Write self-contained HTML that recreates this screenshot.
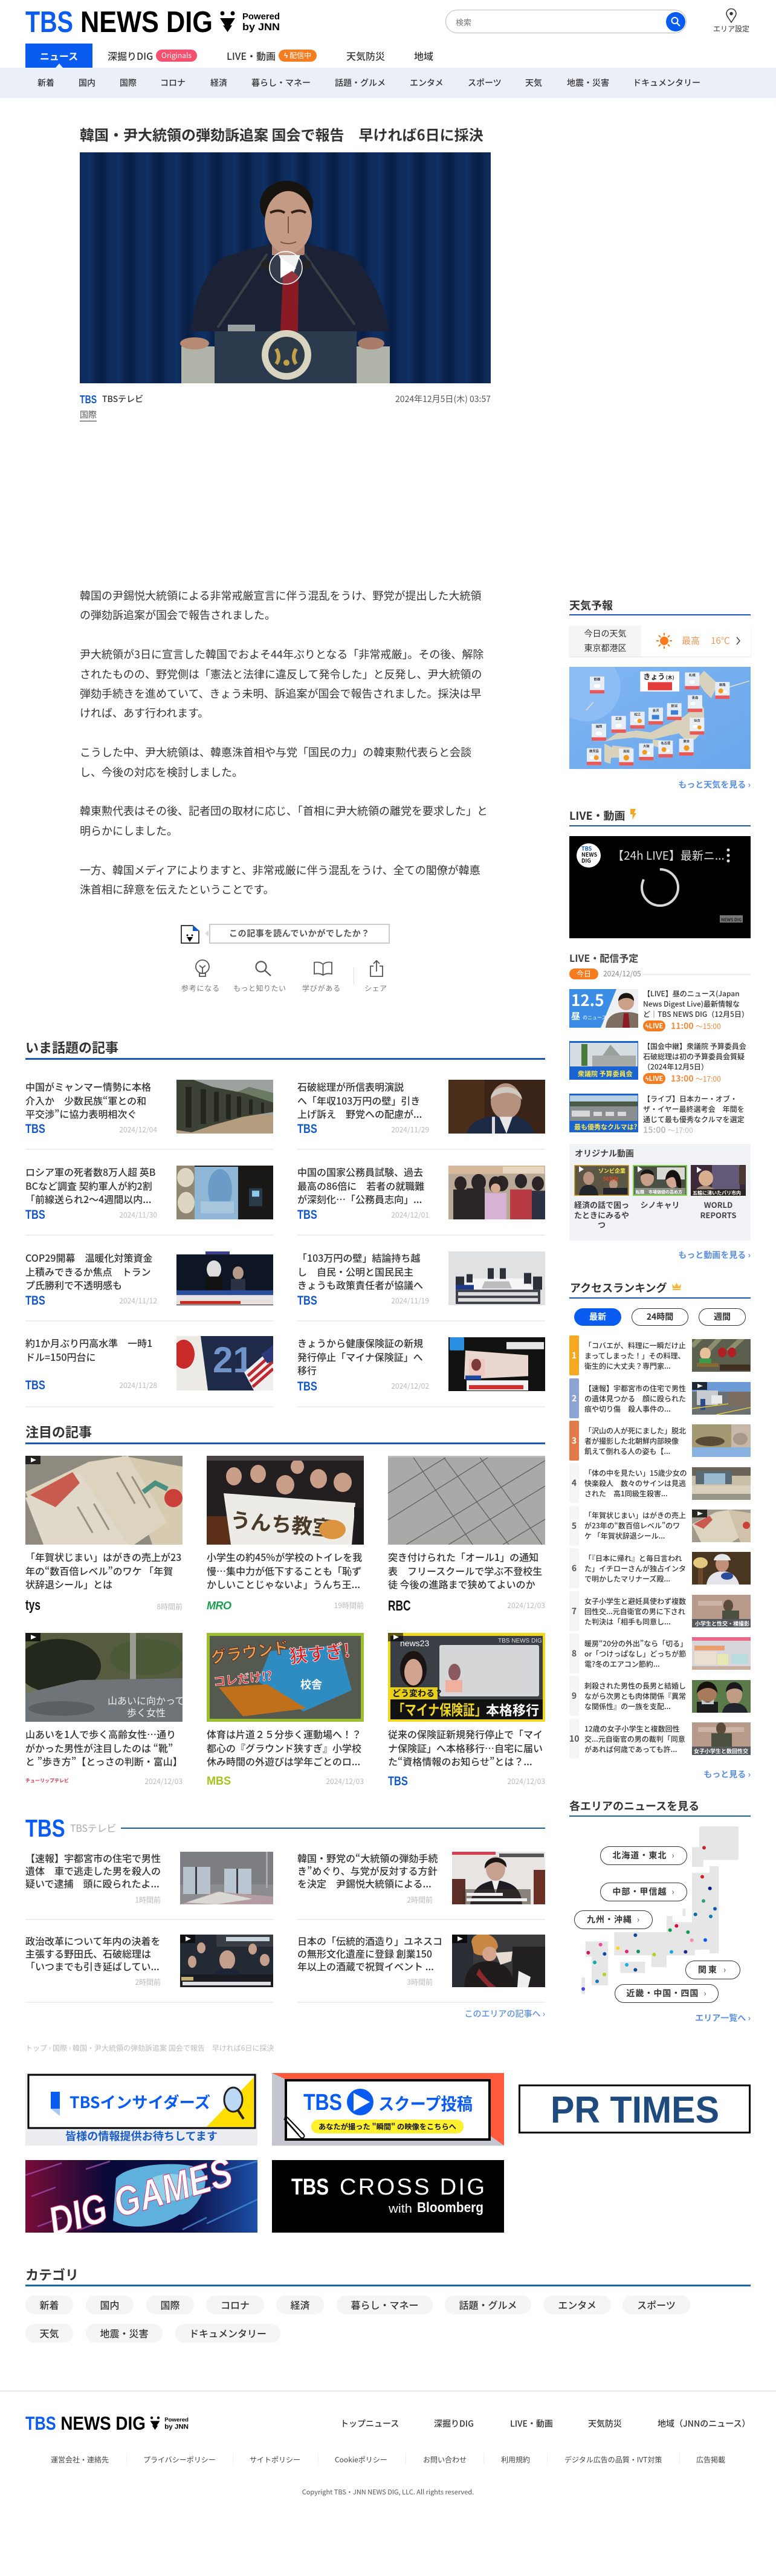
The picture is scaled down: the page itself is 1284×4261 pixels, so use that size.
<!DOCTYPE html>
<html lang="ja"><head><meta charset="utf-8"><title>韓国・尹大統領の弾劾訴追案 国会で報告　早ければ6日に採決 | TBS NEWS DIG</title>
<style>
html,body{margin:0;padding:0;width:1284px;height:4261px;background:#fff;overflow:hidden}
body{position:relative;font-family:"Noto Sans CJK JP","Liberation Sans",sans-serif;color:#333}
.a{position:absolute;white-space:nowrap}
svg.a{display:block}
.sub{top:127px;font-size:14px;line-height:20px;font-weight:500;color:#333}
.nv{top:80px;font-size:16px;line-height:24px;font-weight:500;color:#333}
.h2{font-size:22px;line-height:30px;font-weight:700;color:#333}
.h3{font-size:18px;line-height:26px;font-weight:700;color:#333}
.ln{height:3px;background:#1a58b4}
.tt{font-size:16px;line-height:22.6px;font-weight:500;color:#333}
.d{font-size:12px;line-height:16px;color:#bbb}
.tb{font:700 21px/20px "Liberation Sans",sans-serif;color:#1256c8;transform:scaleX(.78);transform-origin:0 0}
.dv{height:2px;background:#eee;width:410px}
.body{font-size:18px;line-height:32.4px;color:#333}
.sm{font-size:12px;line-height:17px;font-weight:500;color:#333}
.rn{left:942px;width:16px;height:66px;line-height:66px;text-align:center;font-size:14px;font-weight:700;background:#f5f5f5;color:#555;border-radius:2px}
.more{font-size:14px;line-height:20px;font-weight:700;color:#5c8fdc}
.pill{height:31px;line-height:30px;background:#f5f5f5;border-radius:15px;text-align:center;font-size:16px;font-weight:500;color:#333}
.fn{top:3999px;font-size:14px;line-height:20px;font-weight:500;color:#333}
.fl{top:4060px;font-size:12px;line-height:18px;color:#444}
.fs{top:4058px;width:1px;height:17px;background:#eee}
.ar{height:31px;line-height:29px;box-sizing:border-box;border:1px solid #333;border-radius:16px;background:#fff;font-size:14px;font-weight:700;color:#333;text-align:center}
.ar i{font-style:normal;font-weight:400;color:#555;margin-left:8px;font-size:14px}
</style></head><body>

<!-- header -->
<svg class="a" style="left:42px;top:17px" width="421" height="37" viewBox="0 0 421 37">
<text x="0" y="36" font-family="Liberation Sans" font-weight="700" font-size="49" textLength="79" lengthAdjust="spacingAndGlyphs" fill="#0a5cf0">TBS</text>
<text x="91" y="36" font-family="Liberation Sans" font-weight="700" font-size="49" textLength="219" lengthAdjust="spacingAndGlyphs" fill="#000">NEWS DIG</text>
<circle cx="326" cy="5" r="3.5"/><circle cx="343" cy="5" r="3.5"/>
<polygon points="322,13 347,13 339,25 342,25 334.5,36 327,25 330,25"/>
<text x="359" y="15" font-family="Liberation Sans" font-weight="700" font-size="15" textLength="62" lengthAdjust="spacingAndGlyphs">Powered</text>
<text x="359" y="33" font-family="Liberation Sans" font-weight="700" font-size="17" textLength="62" lengthAdjust="spacingAndGlyphs">by JNN</text>
</svg>
<div class="a" style="left:737px;top:16px;width:399px;height:39px;box-sizing:border-box;border:1px solid #bbb;border-radius:20px"></div>
<div class="a" style="left:754px;top:28px;font-size:13px;line-height:18px;color:#777">検索</div>
<div class="a" style="left:1102px;top:20px;width:32px;height:32px;border-radius:50%;background:#0a5cf0"></div>
<svg class="a" style="left:1108px;top:26px" width="20" height="20" viewBox="0 0 20 20" fill="none" stroke="#fff" stroke-width="2"><circle cx="8.5" cy="8" r="5"/><path d="M12 12l5 5"/></svg>
<svg class="a" style="left:1199px;top:14px" width="22" height="24" viewBox="0 0 22 24" fill="none" stroke="#333" stroke-width="1.5"><path d="M11 23C6 15 3 12 3 8.5a8 8 0 0 1 16 0C19 12 16 15 11 23z"/><circle cx="11" cy="8.5" r="2" fill="#333"/></svg>
<div class="a" style="left:1178px;top:39px;width:64px;text-align:center;font-size:12px;line-height:17px;color:#333">エリア設定</div>

<div class="a" style="left:42px;top:72px;width:111px;height:40px;background:#0a5cf0"></div>
<div class="a" style="left:42px;top:80px;width:111px;text-align:center;font-size:16px;line-height:24px;font-weight:700;color:#fff">ニュース</div>
<div class="a" style="left:92px;top:105px;width:0;height:0;border-left:6px solid transparent;border-right:6px solid transparent;border-bottom:7px solid #eaeff8;z-index:3"></div>
<div class="a nv" style="left:178px">深掘りDIG</div>
<div class="a" style="left:258px;top:82px;width:68px;height:20px;border-radius:10px;background:#f5506e;color:#fff;font-size:12px;line-height:20px;text-align:center">Originals</div>
<div class="a nv" style="left:375px">LIVE・動画</div>
<div class="a" style="left:461px;top:82px;width:63px;height:20px;border-radius:10px;background:#f57c1f;color:#fff;font-size:12px;line-height:20px;text-align:center"><b>ϟ</b> 配信中</div>
<div class="a nv" style="left:573px">天気防災</div>
<div class="a nv" style="left:685px">地域</div>

<div class="a" style="left:0;top:112px;width:1284px;height:50px;background:#eaeff8"></div>
<div class="a sub" style="left:62px">新着</div>
<div class="a sub" style="left:130px">国内</div>
<div class="a sub" style="left:198px">国際</div>
<div class="a sub" style="left:265px">コロナ</div>
<div class="a sub" style="left:348px">経済</div>
<div class="a sub" style="left:416px">暮らし・マネー</div>
<div class="a sub" style="left:554px">話題・グルメ</div>
<div class="a sub" style="left:678px">エンタメ</div>
<div class="a sub" style="left:774px">スポーツ</div>
<div class="a sub" style="left:869px">天気</div>
<div class="a sub" style="left:938px">地震・災害</div>
<div class="a sub" style="left:1047px">ドキュメンタリー</div>

<!-- article -->
<div class="a" style="left:132px;top:204px;font-size:24px;line-height:36px;font-weight:700;color:#333">韓国・尹大統領の弾劾訴追案 国会で報告　早ければ6日に採決</div>
<svg class="a" style="left:132px;top:252px" width="680" height="382" viewBox="0 0 680 382">
<defs><linearGradient id="cur" x1="0" x2="1" y1="0" y2="0"><stop offset="0" stop-color="#0e2b5a"/><stop offset=".35" stop-color="#0f3063"/><stop offset=".55" stop-color="#0b2550"/><stop offset=".75" stop-color="#081d42"/><stop offset="1" stop-color="#0e2b5a"/></linearGradient>
<pattern id="cp" width="48" height="382" patternUnits="userSpaceOnUse"><rect width="48" height="382" fill="url(#cur)"/></pattern></defs>
<rect width="680" height="382" fill="url(#cp)"/>
<path d="M184 296C190 230 215 190 240 172L320 150 372 150 453 172C480 200 505 250 512 296Z" fill="#1b2236"/>
<polygon points="320,150 372,150 371,296 325,296" fill="#eef0f0"/>
<polygon points="300,156 320,150 345,205 332,296 300,296" fill="#1b2236"/>
<polygon points="392,156 372,150 352,205 361,296 392,296" fill="#1b2236"/>
<polygon points="336,205 350,195 362,205 361,296 332,296" fill="#8a1a24"/>
<ellipse cx="342" cy="86" rx="44" ry="39" fill="#17130f"/>
<rect x="318" y="130" width="54" height="40" fill="#b08672"/>
<ellipse cx="345" cy="116" rx="39" ry="52" fill="#c49a84"/>
<path d="M315 100q14-7 24 0M350 100q14-7 24 0" stroke="#2c2018" stroke-width="4" fill="none"/>
<path d="M345 106v28M332 148q13 6 26 0" stroke="#7c5442" stroke-width="2" fill="none"/>
<path d="M310 168L228 290M372 168L455 285" stroke="#3c3f46" stroke-width="4" fill="none"/>
<circle cx="308" cy="186" r="8" fill="#222"/><circle cx="375" cy="186" r="8" fill="#222"/>
<rect x="168" y="321" width="56" height="61" fill="#b0b3a8"/><rect x="457" y="321" width="56" height="61" fill="#b0b3a8"/>
<rect x="245" y="285" width="45" height="12" fill="#9aa0a0"/>
<ellipse cx="190" cy="316" rx="24" ry="10" fill="#b78a74"/><ellipse cx="482" cy="316" rx="22" ry="10" fill="#a87c68"/>
<rect x="223" y="296" width="235" height="86" fill="#2c3a4e"/>
<circle cx="342" cy="335" r="41" fill="#d8d4c0"/><circle cx="342" cy="335" r="30" fill="#2c3a48"/>
<path d="M325 325q8 14 0 25M358 325q-8 14 0 25" stroke="#c2a04c" stroke-width="6" fill="none"/>
<circle cx="342" cy="348" r="5" fill="#c2a04c"/>
<circle cx="341" cy="191" r="27" fill="rgba(255,255,255,.12)" stroke="#fff" stroke-width="1.5"/>
<polygon points="332,174 358,192 332,208" fill="#fff"/>
</svg>
<div class="a tb" style="left:132px;top:651px;color:#1256c8;font-size:18px;transform:scaleX(.78)">TBS</div>
<div class="a" style="left:169px;top:650px;font-size:14px;line-height:20px;font-weight:500;color:#333">TBSテレビ</div>
<div class="a" style="right:472px;top:650px;font-size:14px;line-height:20px;color:#555">2024年12月5日(木) 03:57</div>
<div class="a" style="left:132px;top:676px;font-size:14px;line-height:20px;color:#555;border-bottom:1px solid #333">国際</div>

<div class="a body" style="left:132px;top:969px">韓国の尹錫悦大統領による非常戒厳宣言に伴う混乱をうけ、野党が提出した大統領<br>の弾劾訴追案が国会で報告されました。<br><br>尹大統領が3日に宣言した韓国でおよそ44年ぶりとなる「非常戒厳」。その後、解除<br>されたものの、野党側は「憲法と法律に違反して発令した」と反発し、尹大統領の<br>弾劾手続きを進めていて、きょう未明、訴追案が国会で報告されました。採決は早<br>ければ、あす行われます。<br><br>こうした中、尹大統領は、韓悳洙首相や与党「国民の力」の韓東勲代表らと会談<br>し、今後の対応を検討しました。<br><br>韓東勲代表はその後、記者団の取材に応じ、「首相に尹大統領の離党を要求した」と<br>明らかにしました。<br><br>一方、韓国メディアによりますと、非常戒厳に伴う混乱をうけ、全ての閣僚が韓悳<br>洙首相に辞意を伝えたということです。</div>

<!-- feedback -->
<svg class="a" style="left:299px;top:1530px" width="31" height="31" viewBox="0 0 31 31"><path d="M1 1H20L30 10V30H1Z" fill="#fff" stroke="#000" stroke-width="1.5"/><polygon points="20,0 31,10 20,10" fill="#1256c8"/><circle cx="11" cy="17" r="1.5"/><circle cx="19" cy="17" r="1.5"/><polygon points="10,20 20,20 15,28"/></svg>
<div class="a" style="left:346px;top:1528px;width:299px;height:33px;box-sizing:border-box;border:2px solid #ccc;text-align:center;font-size:14px;line-height:29px;font-weight:700;color:#555;letter-spacing:.6px">この記事を読んでいかがでしたか？</div>
<div class="a" style="left:339px;top:1539px;width:0;height:0;border-top:5px solid transparent;border-bottom:5px solid transparent;border-right:6px solid #ddd"></div>
<svg class="a" style="left:320px;top:1586px" width="30" height="32" viewBox="0 0 30 32" fill="none" stroke="#555" stroke-width="1.8"><circle cx="15" cy="13" r="11"/><path d="M10 24h10v5h-10zM15 24v-9M10 11l5 4 5-4"/></svg>
<svg class="a" style="left:421px;top:1588px" width="30" height="28" viewBox="0 0 30 28" fill="none" stroke="#555" stroke-width="2.2"><circle cx="11" cy="11" r="8.5"/><path d="M17 17l10 9"/></svg>
<svg class="a" style="left:518px;top:1590px" width="33" height="24" viewBox="0 0 33 24" fill="none" stroke="#555" stroke-width="1.8"><path d="M16.5 5C12 1 7 1 2 2v19c5-1 10-1 14.5 2 4.5-3 9.5-3 14.5-2V2C26 1 21 1 16.5 5zM16.5 5v18"/></svg>
<div class="a" style="left:585px;top:1600px;width:1px;height:28px;background:#ddd"></div>
<svg class="a" style="left:611px;top:1587px" width="24" height="29" viewBox="0 0 24 29" fill="none" stroke="#555" stroke-width="1.8"><path d="M7 11H2v17h20V11h-5M12 20V2M7 7l5-5 5 5"/></svg>
<div class="a" style="left:300px;top:1626px;font-size:12px;line-height:17px;color:#777;letter-spacing:.8px">参考になる</div>
<div class="a" style="left:386px;top:1626px;font-size:12px;line-height:17px;color:#777;letter-spacing:.5px">もっと知りたい</div>
<div class="a" style="left:500px;top:1626px;font-size:12px;line-height:17px;color:#777;letter-spacing:.8px">学びがある</div>
<div class="a" style="left:603px;top:1626px;font-size:12px;line-height:17px;color:#777;letter-spacing:.5px">シェア</div>

<!-- いま話題 -->
<div class="a h2" style="left:42px;top:1717px">いま話題の記事</div>
<div class="a ln" style="left:42px;top:1750px;width:860px"></div>

<div class="a tt" style="left:42px;top:1786px">中国がミャンマー情勢に本格<br>介入か　少数民族“軍との和<br>平交渉”に協力表明相次ぐ</div>
<div class="a tb" style="left:42px;top:1858px">TBS</div><div class="a d" style="right:1024px;top:1861px">2024/12/04</div>
<svg class="a" style="left:292px;top:1786px" width="160" height="89" viewBox="0 0 160 90" preserveAspectRatio="none"><rect width="160" height="90" fill="#9da29f"/><polygon points="90,25 120,12 160,22 160,45 90,45" fill="#6b7a62"/><rect y="58" width="160" height="32" fill="#b39d7e"/><polygon points="0,0 28,0 60,12 110,22 160,38 160,54 110,62 60,76 25,88 0,84" fill="#3d4236"/><g fill="#23261f"><rect x="15" y="12" width="10" height="68"/><rect x="40" y="16" width="9" height="58"/><rect x="62" y="20" width="8" height="50"/><rect x="82" y="24" width="8" height="42"/><rect x="100" y="28" width="7" height="34"/><rect x="120" y="33" width="6" height="25"/><rect x="140" y="38" width="5" height="18"/></g></svg>
<div class="a dv" style="left:42px;top:1900px"></div>

<div class="a tt" style="left:492px;top:1786px">石破総理が所信表明演説<br>へ「年収103万円の壁」引き<br>上げ訴え　野党への配慮が...</div>
<div class="a tb" style="left:492px;top:1858px">TBS</div><div class="a d" style="right:574px;top:1861px">2024/11/29</div>
<svg class="a" style="left:742px;top:1786px" width="160" height="89" viewBox="0 0 160 90" preserveAspectRatio="none"><rect width="160" height="90" fill="#3a2417"/><rect x="0" width="60" height="90" fill="#4a2e1a"/><path d="M30 90C36 68 60 62 78 60h30c20 4 30 14 34 30z" fill="#1d2a44"/><ellipse cx="95" cy="36" rx="25" ry="30" fill="#b6927e"/><path d="M70 32C70 6 120 4 122 34 112 18 84 18 70 32z" fill="#cfc9c2"/><polygon points="84,62 106,62 96,90" fill="#e6e6e6"/><rect x="72" y="62" width="5" height="28" fill="#ddd"/></svg>
<div class="a dv" style="left:492px;top:1900px"></div>

<div class="a tt" style="left:42px;top:1927px">ロシア軍の死者数8万人超 英B<br>BCなど調査 契約軍人が約2割<br>「前線送られ2～4週間以内...</div>
<div class="a tb" style="left:42px;top:2000px">TBS</div><div class="a d" style="right:1024px;top:2002px">2024/11/30</div>
<svg class="a" style="left:292px;top:1928px" width="160" height="89" viewBox="0 0 160 90" preserveAspectRatio="none"><rect width="160" height="90" fill="#1a1817"/><rect width="30" height="90" fill="#8f8674"/><rect x="30" y="2" width="72" height="88" fill="#8fb6d4"/><ellipse cx="72" cy="40" rx="20" ry="34" fill="#6b9cc8"/><ellipse cx="15" cy="20" rx="14" ry="16" fill="#ddd6c0"/><ellipse cx="16" cy="62" rx="14" ry="18" fill="#ddd6c0"/><rect x="40" y="60" width="55" height="20" fill="#a8c7dd"/><rect x="120" y="38" width="22" height="30" fill="#2a3a48"/><rect x="125" y="42" width="12" height="10" fill="#8fc7e8"/></svg>
<div class="a dv" style="left:42px;top:2042px"></div>

<div class="a tt" style="left:492px;top:1927px">中国の国家公務員試験、過去<br>最高の86倍に　若者の就職難<br>が深刻化…「公務員志向」...</div>
<div class="a tb" style="left:492px;top:2000px">TBS</div><div class="a d" style="right:574px;top:2002px">2024/12/01</div>
<svg class="a" style="left:742px;top:1928px" width="160" height="89" viewBox="0 0 160 90" preserveAspectRatio="none"><rect width="160" height="90" fill="#b8a898"/><rect width="160" height="14" fill="#d8b89a"/><rect x="90" y="2" width="68" height="11" fill="#e8d6c0"/><g fill="#2a2426"><ellipse cx="50" cy="28" rx="12" ry="14"/><ellipse cx="120" cy="26" rx="10" ry="12"/><ellipse cx="20" cy="30" rx="10" ry="12"/><ellipse cx="88" cy="30" rx="11" ry="13"/><ellipse cx="148" cy="30" rx="10" ry="12"/><rect x="30" y="38" width="30" height="52"/><rect x="8" y="40" width="22" height="50"/></g><rect x="60" y="46" width="36" height="44" fill="#d6b2d4"/><ellipse cx="78" cy="32" rx="11" ry="14" fill="#2a2020"/><ellipse cx="78" cy="38" rx="8" ry="8" fill="#d8aa94"/><rect x="102" y="40" width="36" height="50" fill="#b83a42"/><rect x="138" y="42" width="22" height="48" fill="#2c3244"/></svg>
<div class="a dv" style="left:492px;top:2042px"></div>

<div class="a tt" style="left:42px;top:2069px">COP29開幕　温暖化対策資金<br>上積みできるか焦点　トラン<br>プ氏勝利で不透明感も</div>
<div class="a tb" style="left:42px;top:2142px">TBS</div><div class="a d" style="right:1024px;top:2144px">2024/11/12</div>
<svg class="a" style="left:292px;top:2070px" width="160" height="89" viewBox="0 0 160 90" preserveAspectRatio="none"><rect width="160" height="90" fill="#0e1626"/><rect y="0" width="160" height="5" fill="#fff"/><rect x="48" y="0" width="40" height="5" fill="#3a3f8a"/><ellipse cx="62" cy="30" rx="12" ry="15" fill="#ddd"/><ellipse cx="102" cy="36" rx="9" ry="11" fill="#b59a88"/><rect x="90" y="46" width="24" height="30" fill="#2c3246"/><rect x="48" y="42" width="28" height="34" fill="#111"/><rect y="65" width="160" height="8" fill="#2a4e9a"/><rect y="73" width="160" height="9" fill="#e6e6e6"/><rect y="81" width="160" height="8" fill="#e8e0d8"/><rect x="6" y="83" width="100" height="5" fill="#c8281e"/></svg>
<div class="a dv" style="left:42px;top:2184px"></div>

<div class="a tt" style="left:492px;top:2069px">「103万円の壁」結論持ち越<br>し　自民・公明と国民民主<br>きょうも政策責任者が協議へ</div>
<div class="a tb" style="left:492px;top:2142px">TBS</div><div class="a d" style="right:574px;top:2144px">2024/11/19</div>
<svg class="a" style="left:742px;top:2070px" width="160" height="89" viewBox="0 0 160 90" preserveAspectRatio="none"><rect width="160" height="90" fill="#dfe1e3"/><polygon points="35,45 125,45 150,72 10,72" fill="#f5f5f5"/><polygon points="60,50 100,50 105,62 55,62" fill="#bcbcbc"/><g fill="#2c3038"><rect x="12" y="42" width="14" height="20"/><rect x="30" y="38" width="10" height="14"/><rect x="65" y="28" width="10" height="18"/><rect x="85" y="28" width="10" height="18"/><rect x="125" y="36" width="12" height="18"/><rect x="140" y="42" width="15" height="22"/></g><rect x="12" y="56" width="30" height="8" fill="#1d3a8a"/><rect x="12" y="64" width="140" height="24" fill="#3c4048"/><rect x="16" y="68" width="132" height="6" fill="#ddd"/><rect x="16" y="78" width="132" height="6" fill="#ddd"/></svg>
<div class="a dv" style="left:492px;top:2184px"></div>

<div class="a tt" style="left:42px;top:2210px">約1か月ぶり円高水準　一時1<br>ドル=150円台に</div>
<div class="a tb" style="left:42px;top:2282px">TBS</div><div class="a d" style="right:1024px;top:2284px">2024/11/28</div>
<svg class="a" style="left:292px;top:2210px" width="160" height="90" viewBox="0 0 160 90" preserveAspectRatio="none"><rect width="160" height="90" fill="#1f2a48"/><polygon points="0,0 40,0 52,90 0,90" fill="#eceae4"/><ellipse cx="12" cy="30" rx="18" ry="24" fill="#c92a2a"/><text x="60" y="60" font-family="Liberation Sans" font-weight="700" font-size="60" fill="#6f95c8">21</text><polygon points="112,60 160,18 160,90 128,90" fill="#eee"/><g stroke="#c02830" stroke-width="5"><path d="M118 66l42-38M122 75l38-33M126 84l34-30"/></g><polygon points="140,30 160,15 160,42 150,45" fill="#2c3a78"/></svg>
<div class="a dv" style="left:42px;top:2326px"></div>

<div class="a tt" style="left:492px;top:2210px">きょうから健康保険証の新規<br>発行停止「マイナ保険証」へ<br>移行</div>
<div class="a tb" style="left:492px;top:2284px">TBS</div><div class="a d" style="right:574px;top:2285px">2024/12/02</div>
<svg class="a" style="left:742px;top:2212px" width="160" height="89" viewBox="0 0 160 90" preserveAspectRatio="none"><rect width="160" height="90" fill="#111"/><rect x="2" y="0" width="24" height="22" rx="2" fill="#2c8ee0"/><rect x="96" y="8" width="62" height="12" fill="#e6e6e6"/><polygon points="28,22 132,30 132,65 26,70" fill="#ead8d0"/><rect x="34" y="36" width="26" height="30" fill="#efc8c0"/><ellipse cx="46" cy="46" rx="8" ry="10" fill="#7a3a3a"/><rect x="28" y="64" width="26" height="7" fill="#1d4aa0"/><rect x="30" y="72" width="102" height="17" fill="#f2f2f2"/><rect x="34" y="80" width="90" height="7" fill="#d03030"/></svg>
<div class="a dv" style="left:492px;top:2326px"></div>

<!-- 注目 -->
<div class="a h2" style="left:42px;top:2353px">注目の記事</div>
<div class="a ln" style="left:42px;top:2386px;width:860px"></div>

<svg class="a" style="left:42px;top:2408px" width="260" height="147" viewBox="0 0 260 147" preserveAspectRatio="none"><rect width="260" height="147" fill="#8f8a80"/><polygon points="160,0 260,18 260,147 210,147" fill="#d6cab0"/><polygon points="0,60 105,10 170,0 235,110 180,147 40,147" fill="#ddd4c0"/><polygon points="0,70 90,28 170,147 30,147" fill="#e0d8c8"/><path d="M8 65l70-38 12 18-40 40z" fill="#c85a50"/><circle cx="245" cy="70" r="15" fill="#c84038"/><path d="M195 60l20-15 20 10" stroke="#4a9080" stroke-width="8" fill="none"/><g fill="#6a6450" opacity=".6"><rect x="150" y="28" width="3" height="60" transform="rotate(-30 150 28)"/><rect x="175" y="35" width="3" height="60" transform="rotate(-30 175 35)"/><rect x="85" y="85" width="3" height="50" transform="rotate(-30 85 85)"/><rect x="112" y="80" width="3" height="50" transform="rotate(-30 112 80)"/></g><rect width="25" height="14" fill="rgba(0,0,0,.75)"/><polygon points="9,3 18,7 9,11" fill="#fff"/></svg>
<div class="a tt" style="left:42px;top:2564px">「年賀状じまい」はがきの売上が23<br>年の“数百倍レベル”のワケ 「年賀<br>状辞退シール」とは</div>
<div class="a" style="left:42px;top:2642px;font:700 24px/28px 'Liberation Sans',sans-serif;color:#111;transform:scaleX(.72);transform-origin:0 0">tys</div>
<div class="a d" style="right:982px;top:2650px">8時間前</div>

<svg class="a" style="left:342px;top:2408px" width="260" height="147" viewBox="0 0 260 147" preserveAspectRatio="none"><rect width="260" height="147" fill="#231e20"/><g fill="#c89e88"><ellipse cx="45" cy="34" rx="13" ry="15"/><ellipse cx="85" cy="30" rx="13" ry="15"/><ellipse cx="130" cy="48" rx="15" ry="16"/><ellipse cx="185" cy="38" rx="14" ry="16"/><ellipse cx="225" cy="44" rx="15" ry="16"/><ellipse cx="150" cy="18" rx="11" ry="12"/></g><rect y="0" width="260" height="8" fill="#4a4346"/><rect x="0" y="100" width="40" height="47" fill="#5c3018"/><polygon points="28,62 246,78 240,147 40,147" fill="#ecebe5"/><text x="38" y="118" font-family="Noto Sans CJK JP" font-weight="700" font-size="34" fill="#4a3a2a" transform="rotate(5 38 118)">うんち教室</text><ellipse cx="208" cy="122" rx="22" ry="16" fill="#dc9440"/><rect x="244" y="85" width="16" height="62" fill="#1c1a1c"/></svg>
<div class="a tt" style="left:342px;top:2564px">小学生の約45%が学校のトイレを我<br>慢…集中力が低下することも「恥ず<br>かしいことじゃないよ」うんち王...</div>
<div class="a" style="left:342px;top:2646px;font:italic 700 18px/20px 'Liberation Sans',sans-serif;color:#1aa050;letter-spacing:-.5px">MRO</div>
<div class="a d" style="right:682px;top:2648px">19時間前</div>

<svg class="a" style="left:642px;top:2408px" width="260" height="147" viewBox="0 0 260 147" preserveAspectRatio="none"><rect width="260" height="147" fill="#a9a9a7"/><g stroke="#5c5c5c" stroke-width="1.2" fill="none"><path d="M0 62L100 0M0 106L170 0M30 147L260 8M100 147L260 50M40 0L140 147M90 0L200 147M150 0L255 147"/><path d="M190 147L260 105"/></g><rect width="260" height="3" fill="#bbb"/></svg>
<div class="a tt" style="left:642px;top:2564px">突き付けられた「オール1」の通知<br>表　フリースクールで学ぶ不登校生<br>徒 今後の進路まで狭めてよいのか</div>
<div class="a" style="left:642px;top:2645px;font:700 24px/24px 'Liberation Sans',sans-serif;color:#111;transform:scaleX(.72);transform-origin:0 0">RBC</div>
<div class="a d" style="right:382px;top:2648px">2024/12/03</div>

<svg class="a" style="left:42px;top:2701px" width="260" height="147" viewBox="0 0 260 147" preserveAspectRatio="none"><rect width="260" height="147" fill="#6d7558"/><rect width="260" height="78" fill="#565c40"/><ellipse cx="55" cy="55" rx="70" ry="45" fill="#23281c"/><ellipse cx="200" cy="40" rx="60" ry="30" fill="#4a5a36"/><rect x="173" y="0" width="10" height="90" fill="#9a9a90"/><polygon points="0,100 90,78 260,75 260,147 0,147" fill="#6e7478"/><ellipse cx="60" cy="125" rx="55" ry="12" fill="#5a5f63"/><text x="136" y="118" font-family="Noto Sans CJK JP" font-size="16" fill="#eee">山あいに向かって</text><text x="168" y="138" font-family="Noto Sans CJK JP" font-size="16" fill="#eee">歩く女性</text><rect width="25" height="14" fill="rgba(0,0,0,.75)"/><polygon points="9,3 18,7 9,11" fill="#fff"/></svg>
<div class="a tt" style="left:42px;top:2857px">山あいを1人で歩く高齢女性…通り<br>がかった男性が注目したのは “靴”<br>と ”歩き方”【とっさの判断・富山】</div>
<div class="a" style="left:42px;top:2939px;font-size:8px;line-height:14px;font-weight:700;color:#d8324a">チューリップテレビ</div>
<div class="a d" style="right:982px;top:2939px">2024/12/03</div>

<svg class="a" style="left:342px;top:2701px" width="260" height="147" viewBox="0 0 260 147" preserveAspectRatio="none"><rect width="260" height="147" fill="#9cbf30"/><rect x="5" y="5" width="250" height="137" fill="#555a50"/><polygon points="105,30 220,20 240,95 160,130 85,80" fill="#2e8cc0"/><polygon points="20,90 100,85 165,125 60,138" fill="#c0701a"/><text x="8" y="50" font-family="Noto Sans CJK JP" font-weight="700" font-size="26" fill="#e8a050" stroke="#5a1a10" stroke-width=".8" transform="rotate(-8 8 50)">グラウンド</text><text x="138" y="50" font-family="Noto Sans CJK JP" font-weight="700" font-size="30" fill="#d82020" stroke="#fff" stroke-width=".8" transform="rotate(-6 138 50)">狭すぎ!</text><text x="12" y="88" font-family="Noto Sans CJK JP" font-weight="700" font-size="20" fill="#e02020" stroke="#fff" stroke-width=".7" transform="rotate(-6 12 88)">コレだけ!?</text><text x="155" y="92" font-family="Noto Sans CJK JP" font-weight="700" font-size="18" fill="#fff">校舎</text></svg>
<div class="a tt" style="left:342px;top:2857px">体育は片道２５分歩く運動場へ！？<br>都心の『グラウンド狭すぎ』小学校<br>休み時間の外遊びは学年ごとのロ...</div>
<div class="a" style="left:342px;top:2937px;font:700 19px/20px 'Liberation Sans',sans-serif;color:#a8c020;transform:scaleX(.95);transform-origin:0 0">MBS</div>
<div class="a d" style="right:682px;top:2939px">2024/12/03</div>

<svg class="a" style="left:642px;top:2701px" width="260" height="147" viewBox="0 0 260 147" preserveAspectRatio="none"><rect width="260" height="147" fill="#f0d820"/><rect x="4" y="5" width="252" height="138" fill="#3a3f46"/><rect x="85" y="20" width="165" height="85" rx="3" fill="#d4d6d8"/><ellipse cx="42" cy="60" rx="22" ry="30" fill="#1c1412"/><ellipse cx="42" cy="65" rx="15" ry="22" fill="#d0a48e"/><rect x="15" y="90" width="55" height="15" fill="#23262a"/><ellipse cx="110" cy="65" rx="10" ry="14" fill="#8a5a60"/><rect x="95" y="78" width="28" height="20" fill="#f0b0a0"/><rect x="4" y="110" width="252" height="33" fill="#111"/><rect x="4" y="90" width="78" height="20" fill="#e8d018"/><text x="7" y="105" font-family="Noto Sans CJK JP" font-weight="700" font-size="14" fill="#111">どう変わる？</text><text x="8" y="136" font-family="Noto Sans CJK JP" font-weight="700" font-size="24" fill="#f0d820" textLength="155" lengthAdjust="spacingAndGlyphs">「マイナ保険証」</text><text x="162" y="136" font-family="Noto Sans CJK JP" font-weight="700" font-size="22" fill="#fff">本格移行</text><text x="20" y="22" font-family="Liberation Sans" font-size="14" fill="#fff">news23</text><text x="182" y="16" font-family="Liberation Sans" font-size="10" fill="#ddd">TBS NEWS DIG</text><rect width="25" height="14" fill="rgba(0,0,0,.6)"/><polygon points="9,3 18,7 9,11" fill="#fff"/></svg>
<div class="a tt" style="left:642px;top:2857px">従来の保険証新規発行停止で「マイ<br>ナ保険証」へ本格移行…自宅に届い<br>た“資格情報のお知らせ”とは？...</div>
<div class="a tb" style="left:642px;top:2937px">TBS</div>
<div class="a d" style="right:382px;top:2939px">2024/12/03</div>

<!-- TBS -->
<div class="a" style="left:42px;top:3007px;font:700 41px/34px 'Liberation Sans',sans-serif;color:#0a5cf0;transform:scaleX(.8);transform-origin:0 0">TBS</div>
<div class="a" style="left:116px;top:3012px;font-size:16px;line-height:22px;color:#aaa;letter-spacing:-.2px">TBSテレビ</div>
<div class="a" style="left:200px;top:3023px;width:702px;height:2px;background:#1563a6"></div>

<svg class="a" style="left:298px;top:3063px" width="154" height="87" viewBox="0 0 154 87" preserveAspectRatio="none"><rect width="154" height="87" fill="#8a8c90"/><rect x="0" width="154" height="54" fill="#7c7e84"/><rect x="5" y="25" width="45" height="45" fill="#b8c2cc"/><rect x="25" y="25" width="3" height="45" fill="#3c3e44"/><rect x="73" y="28" width="45" height="42" fill="#bac6d2"/><rect x="93" y="28" width="3" height="42" fill="#3c3e44"/><rect x="142" y="0" width="3" height="60" fill="#aaa"/><polygon points="0,87 60,66 154,74 154,87" fill="#b49ca2"/><polygon points="10,84 65,66 120,78 60,87" fill="#d9d8d2"/></svg>
<div class="a" style="left:42px;top:3063px;font-size:16px;line-height:21px;font-weight:500">【速報】宇都宮市の住宅で男性<br>遺体　車で逃走した男を殺人の<br>疑いで逮捕　頭に殴られたよ...</div>
<div class="a d" style="right:1018px;top:3135px">1時間前</div>
<div class="a dv" style="left:42px;top:3174px"></div>

<svg class="a" style="left:748px;top:3063px" width="154" height="87" viewBox="0 0 154 87" preserveAspectRatio="none"><rect width="154" height="87" fill="#e8e4e2"/><rect y="0" x="0" width="72" height="5" fill="#d84050"/><rect x="78" y="3" width="74" height="6" fill="#555"/><rect x="0" y="45" width="22" height="42" fill="#5c3026"/><rect x="135" y="30" width="19" height="57" fill="#6a3026"/><ellipse cx="72" cy="28" rx="16" ry="20" fill="#c8a090"/><path d="M54 28C52 4 92 4 90 26 80 14 66 14 54 28z" fill="#1a1614"/><path d="M30 87C34 58 50 52 66 48h14c18 4 34 10 36 39z" fill="#1c1c22"/><polygon points="66,48 78,48 72,70" fill="#eee"/><rect x="18" y="62" width="112" height="25" fill="rgba(60,50,40,.55)"/><rect x="24" y="68" width="60" height="5" fill="#eee"/><rect x="24" y="77" width="100" height="5" fill="#eee"/></svg>
<div class="a" style="left:492px;top:3063px;font-size:16px;line-height:21px;font-weight:500">韓国・野党の“大統領の弾劾手続<br>き”めぐり、与党が反対する方針<br>を決定　尹錫悦大統領による...</div>
<div class="a d" style="right:568px;top:3135px">2時間前</div>
<div class="a dv" style="left:492px;top:3174px"></div>

<svg class="a" style="left:298px;top:3200px" width="154" height="87" viewBox="0 0 154 87" preserveAspectRatio="none"><rect width="154" height="87" fill="#242a33"/><rect x="60" y="0" width="94" height="20" fill="#3a3e44"/><rect x="76" y="4" width="72" height="7" fill="#c8d4dc"/><g fill="#c4a08c"><ellipse cx="35" cy="22" rx="7" ry="9"/><ellipse cx="120" cy="24" rx="7" ry="9"/><ellipse cx="78" cy="42" rx="13" ry="16"/><ellipse cx="140" cy="42" rx="8" ry="10"/><ellipse cx="20" cy="45" rx="7" ry="10"/></g><path d="M50 87C52 62 66 56 78 56s28 6 30 31z" fill="#1c2438"/><rect y="66" width="154" height="21" fill="#1a1c22"/><rect x="2" y="70" width="20" height="6" fill="#c8b070"/><rect x="4" y="78" width="146" height="6" fill="#ddd"/><rect width="25" height="14" fill="rgba(0,0,0,.6)"/><polygon points="9,3 18,7 9,11" fill="#fff"/></svg>
<div class="a" style="left:42px;top:3200px;font-size:16px;line-height:21px;font-weight:500">政治改革について年内の決着を<br>主張する野田氏、石破総理は<br>「いつまでも引き延ばしてい...</div>
<div class="a d" style="right:1018px;top:3271px">2時間前</div>
<div class="a dv" style="left:42px;top:3311px"></div>

<svg class="a" style="left:748px;top:3200px" width="154" height="87" viewBox="0 0 154 87" preserveAspectRatio="none"><rect width="154" height="87" fill="#3a3a3c"/><rect x="0" width="35" height="87" fill="#2a2e34"/><rect x="100" y="20" width="54" height="67" fill="#211f22"/><path d="M20 87C22 55 36 44 60 44s40 12 44 43z" fill="#201c1c"/><path d="M45 56c10 18 25 30 42 40L60 87 40 66z" fill="#8a2a2e"/><path d="M32 12C34-8 74-6 76 20 70 36 44 38 36 30z" fill="#c88844"/><ellipse cx="62" cy="32" rx="12" ry="12" fill="#d4a58c"/><polygon points="72,30 100,28 98,44 80,50" fill="#e6dcd2"/><polygon points="110,60 130,70 126,87 108,87" fill="#eee"/><rect width="25" height="14" fill="rgba(0,0,0,.75)"/><polygon points="9,3 18,7 9,11" fill="#fff"/></svg>
<div class="a" style="left:492px;top:3200px;font-size:16px;line-height:21px;font-weight:500">日本の「伝統的酒造り」ユネスコ<br>の無形文化遺産に登録 創業150<br>年以上の酒蔵で祝賀イベント ...</div>
<div class="a d" style="right:568px;top:3271px">3時間前</div>
<div class="a dv" style="left:492px;top:3311px"></div>
<div class="a" style="right:382px;top:3321px;font-size:14px;line-height:20px;font-weight:500;color:#5c8fdc">このエリアの記事へ ›</div>

<div class="a" style="left:42px;top:3380px;font-size:12px;line-height:16px;color:#bbb">トップ › 国際 › 韓国・尹大統領の弾劾訴追案 国会で報告　早ければ6日に採決</div>

<!-- banners -->
<svg class="a" style="left:42px;top:3429px" width="384" height="120" viewBox="0 0 384 120"><rect width="384" height="120" fill="#ebedf0"/><rect x="5" y="3" width="375" height="88" fill="#fff" stroke="#000" stroke-width="3"/><polygon points="378,7 378,89 300,89" fill="#ffdd00"/><rect x="42" y="31" width="15" height="28" fill="#0a5cf0"/><polygon points="42,59 57,59 57,71" fill="#a8c4f0"/><text x="73" y="58" font-family="Noto Sans CJK JP" font-weight="700" font-size="26" fill="#0a5cf0" textLength="233" lengthAdjust="spacingAndGlyphs">TBSインサイダーズ</text><ellipse cx="344" cy="44" rx="15" ry="20" fill="#bcd8f4" stroke="#222" stroke-width="3"/><path d="M352 62l9 14" stroke="#222" stroke-width="4"/><text x="66" y="111" font-family="Noto Sans CJK JP" font-weight="700" font-size="18" fill="#1a5cc8" textLength="252" lengthAdjust="spacingAndGlyphs">皆様の情報提供お待ちしてます</text></svg>

<svg class="a" style="left:450px;top:3429px" width="384" height="120" viewBox="0 0 384 120"><rect width="384" height="120" fill="#c3c6ce"/><polygon points="0,0 384,0 384,120 360,103 360,10 22,10" fill="#ff5a3c"/><rect x="23" y="12" width="337" height="98" fill="#fff" stroke="#000" stroke-width="4"/><text x="52" y="61" font-family="Liberation Sans" font-weight="700" font-size="38" fill="#0a5cf0" textLength="64" lengthAdjust="spacingAndGlyphs">TBS</text><ellipse cx="146" cy="48" rx="22" ry="22" fill="#0a5cf0"/><polygon points="135,33 162,48 135,63" fill="#fff"/><text x="176" y="61" font-family="Noto Sans CJK JP" font-weight="700" font-size="28" fill="#0a5cf0" textLength="156" lengthAdjust="spacingAndGlyphs">スクープ投稿</text><rect x="65" y="77" width="252" height="23" rx="11" fill="#fff030"/><text x="77" y="93" font-family="Noto Sans CJK JP" font-weight="700" font-size="12" fill="#111" textLength="228" lengthAdjust="spacingAndGlyphs">あなたが撮った "瞬間" の映像をこちらへ</text><path d="M20 76l27 30c4 4 9-1 5-5L26 74c-3-3-6 0-4 3l22 25" fill="none" stroke="#000" stroke-width="2"/></svg>

<svg class="a" style="left:858px;top:3448px" width="384" height="81" viewBox="0 0 384 81"><rect x="1.5" y="1.5" width="381" height="78" fill="#fff" stroke="#000" stroke-width="3"/><text x="53" y="63" font-family="Liberation Sans" font-weight="700" font-size="62" fill="#1f4a7d" textLength="279" lengthAdjust="spacingAndGlyphs">PR TIMES</text></svg>

<svg class="a" style="left:42px;top:3573px" width="384" height="120" viewBox="0 0 384 120"><defs><linearGradient id="dg" x1="0" x2="1"><stop offset="0" stop-color="#7a0c38"/><stop offset=".35" stop-color="#0a0a38"/><stop offset=".7" stop-color="#0c1048"/><stop offset="1" stop-color="#1c50a8"/></linearGradient></defs><rect width="384" height="120" fill="url(#dg)"/><g stroke="#a050b0" stroke-width="2.5" opacity=".75"><path d="M0 25L60 5M100 15L140 2M10 60L50 45M20 110L60 95M90 115L130 100"/></g><g stroke="#4a90d8" stroke-width="2.5" opacity=".75"><path d="M280 60L340 30M320 20L384 2M300 105L384 65M260 115L300 95"/></g><path d="M150 30C170 5 265 0 290 15 315 35 275 95 255 90 225 110 175 118 145 100Z" fill="#5fb0dc"/><ellipse cx="240" cy="45" rx="42" ry="22" fill="#8fd2e8"/><g transform="rotate(-16 190 60)"><text x="34" y="84" font-family="Liberation Sans" font-weight="700" font-style="italic" font-size="68" fill="#fff" stroke="#e02060" stroke-width="1" textLength="312" lengthAdjust="spacingAndGlyphs">DIG GAMES</text></g></svg>

<svg class="a" style="left:450px;top:3573px" width="384" height="120" viewBox="0 0 384 120"><rect width="384" height="120" fill="#000"/><text x="32" y="57" font-family="Liberation Sans" font-weight="700" font-size="38" fill="#fff" textLength="62" lengthAdjust="spacingAndGlyphs">TBS</text><text x="112" y="57" font-family="Liberation Sans" font-size="38" fill="#fff" textLength="240" lengthAdjust="spacing">CROSS DIG</text><text x="193" y="87" font-family="Liberation Sans" font-size="20" fill="#fff" textLength="39" lengthAdjust="spacingAndGlyphs">with</text><text x="240" y="86" font-family="Liberation Sans" font-weight="700" font-size="23" fill="#fff" textLength="110" lengthAdjust="spacingAndGlyphs">Bloomberg</text></svg>

<!-- category -->
<div class="a h2" style="left:42px;top:3747px">カテゴリ</div>
<div class="a" style="left:42px;top:3779px;width:1200px;height:3px;background:#1668a8"></div>
<div class="a pill" style="left:42px;top:3797px;width:79px">新着</div>
<div class="a pill" style="left:142px;top:3797px;width:79px">国内</div>
<div class="a pill" style="left:242px;top:3797px;width:79px">国際</div>
<div class="a pill" style="left:341px;top:3797px;width:96px">コロナ</div>
<div class="a pill" style="left:457px;top:3797px;width:79px">経済</div>
<div class="a pill" style="left:557px;top:3797px;width:159px">暮らし・マネー</div>
<div class="a pill" style="left:736px;top:3797px;width:143px">話題・グルメ</div>
<div class="a pill" style="left:899px;top:3797px;width:112px">エンタメ</div>
<div class="a pill" style="left:1030px;top:3797px;width:112px">スポーツ</div>
<div class="a pill" style="left:42px;top:3844px;width:79px">天気</div>
<div class="a pill" style="left:142px;top:3844px;width:127px">地震・災害</div>
<div class="a pill" style="left:290px;top:3844px;width:174px">ドキュメンタリー</div>

<!-- sidebar weather -->
<div class="a h3" style="left:942px;top:988px">天気予報</div>
<div class="a ln" style="left:942px;top:1016px;width:300px;height:2px"></div>
<div class="a" style="left:942px;top:1035px;width:300px;height:51px;box-shadow:0 1px 2px rgba(0,0,0,.12);background:#fff"></div>
<div class="a" style="left:942px;top:1035px;width:119px;height:51px;background:#f5f5f5"></div>
<div class="a" style="left:942px;top:1037px;width:119px;text-align:center;font-size:14px;line-height:23.5px;color:#333">今日の天気<br>東京都港区</div>
<svg class="a" style="left:1085px;top:1046px" width="28" height="28" viewBox="0 0 28 28"><circle cx="14" cy="14" r="7" fill="#fa7a1e"/><path d="M14 1v4M14 23v4M1 14h4M23 14h4M5 5l3 3M20 20l3 3M5 23l3-3M20 8l3-3" stroke="#fa7a1e" stroke-width="2"/></svg>
<div class="a" style="left:1128px;top:1048px;font-size:15px;line-height:24px;color:#e8985a">最高</div>
<div class="a" style="left:1176px;top:1048px;font-size:15px;line-height:24px;color:#e8985a">16℃</div>
<svg class="a" style="left:1217px;top:1053px" width="9" height="14" viewBox="0 0 9 14" fill="none" stroke="#444" stroke-width="1.5"><path d="M2 1l5 6-5 6"/></svg>

<svg class="a" style="left:942px;top:1103px" width="300" height="169" viewBox="66 430 900 506" preserveAspectRatio="none" font-family="Noto Sans CJK JP"><defs><linearGradient id="sea" x1="0" x2="1" y1="0" y2="1"><stop offset="0" stop-color="#80b6f4"/><stop offset="1" stop-color="#6aa6ea"/></linearGradient></defs><rect x="66" y="430" width="900" height="506" fill="url(#sea)"/><circle cx="150" cy="530" r="170" fill="#8dbdf5"/><g fill="#d8d2bc"><polygon points="735,450 800,510 790,545 770,585 735,550 715,520 690,500"/><polygon points="700,570 735,640 735,740 690,790 640,790 610,760 560,770 480,790 390,780 290,790 240,800 300,760 400,745 470,755 540,720 630,680 680,640"/><polygon points="280,820 380,830 330,880 270,880"/><polygon points="240,810 280,830 270,910 240,900"/><polygon points="480,790 530,795 510,830 480,820"/></g><path d="M150 645l35-40M860 530l100-30" stroke="#e0dcc8" stroke-width="5" fill="none"/>
<g id="c"><rect x="418" y="453" width="194" height="99" fill="#fff"/><text x="433" y="492" font-size="36" font-weight="700" fill="#222">きょう</text><text x="545" y="492" font-size="24" font-weight="700" fill="#222">(木)</text><rect x="456" y="506" width="120" height="40" fill="#e33c3c"/></g>
<g fill="#eaf0f8" fill-opacity=".95"><rect x="168" y="478" width="72" height="84"/><rect x="640" y="458" width="72" height="84"/><rect x="790" y="505" width="72" height="84"/><rect x="654" y="570" width="72" height="84"/><rect x="551" y="610" width="72" height="84"/><rect x="459" y="632" width="72" height="84"/><rect x="368" y="652" width="72" height="84"/><rect x="275" y="673" width="72" height="84"/><rect x="177" y="712" width="72" height="84"/><rect x="664" y="682" width="72" height="84"/><rect x="611" y="786" width="72" height="84"/><rect x="508" y="795" width="72" height="84"/><rect x="412" y="809" width="72" height="84"/><rect x="313" y="835" width="72" height="84"/><rect x="153" y="833" width="72" height="84"/></g>
<g fill="#e85a5a"><rect x="168" y="545" width="72" height="17"/><rect x="640" y="525" width="72" height="17"/><rect x="790" y="572" width="72" height="17"/><rect x="654" y="637" width="72" height="17"/><rect x="551" y="677" width="72" height="17"/><rect x="459" y="699" width="72" height="17"/><rect x="368" y="719" width="72" height="17"/><rect x="275" y="740" width="72" height="17"/><rect x="177" y="779" width="72" height="17"/><rect x="664" y="749" width="72" height="17"/><rect x="611" y="853" width="72" height="17"/><rect x="508" y="862" width="72" height="17"/><rect x="412" y="876" width="72" height="17"/><rect x="313" y="902" width="72" height="17"/><rect x="153" y="900" width="72" height="17"/></g>
<g fill="#fff" stroke="#bcc6d0"><ellipse cx="204" cy="525" rx="18" ry="12"/><ellipse cx="676" cy="505" rx="16" ry="11"/><ellipse cx="840" cy="555" rx="14" ry="10"/><ellipse cx="680" cy="612" rx="16" ry="11"/><ellipse cx="400" cy="695" rx="15" ry="10"/><ellipse cx="311" cy="722" rx="18" ry="12"/><ellipse cx="213" cy="760" rx="18" ry="12"/><ellipse cx="690" cy="725" rx="14" ry="10"/><ellipse cx="554" cy="845" rx="12" ry="9"/><ellipse cx="460" cy="858" rx="12" ry="9"/><ellipse cx="178" cy="880" rx="14" ry="10"/></g>
<g fill="#f09a20"><circle cx="818" cy="549" r="12"/><circle cx="415" cy="698" r="11"/><circle cx="712" cy="730" r="10"/><circle cx="648" cy="832" r="14"/><circle cx="536" cy="840" r="12"/><circle cx="440" cy="853" r="12"/><circle cx="349" cy="880" r="14"/><circle cx="200" cy="880" r="12"/></g>
<g fill="#3c80d8"><rect x="570" y="645" width="36" height="22"/><rect x="476" y="668" width="36" height="22"/></g>
<g font-size="16" font-weight="700" fill="#3a3a3a" text-anchor="middle"><text x="204" y="497">那覇</text><text x="676" y="477">札幌</text><text x="826" y="524">釧路</text><text x="690" y="589">青森</text><text x="587" y="629">新潟</text><text x="495" y="651">金沢</text><text x="404" y="671">松江</text><text x="311" y="692">広島</text><text x="213" y="731">福岡</text><text x="700" y="701">仙台</text><text x="647" y="805">東京</text><text x="544" y="814">名古屋</text><text x="448" y="828">大阪</text><text x="349" y="854">高知</text><text x="189" y="852">鹿児島</text></g></svg>
<div class="a more" style="right:42px;top:1288px">もっと天気を見る ›</div>

<!-- live -->
<div class="a h3" style="left:942px;top:1336px">LIVE・動画</div>
<svg class="a" style="left:1042px;top:1338px" width="11" height="18" viewBox="0 0 11 18"><polygon points="1,0 10,0 7,7 11,7 4,18 5,9 1,9" fill="#f5a623"/></svg>
<div class="a ln" style="left:942px;top:1365px;width:300px;height:2px"></div>
<svg class="a" style="left:942px;top:1383px" width="300" height="169" viewBox="0 0 300 169" font-family="Noto Sans CJK JP"><rect width="300" height="169" fill="#000"/><circle cx="32" cy="32" r="20" fill="#fff"/><text x="20" y="24" font-size="9" font-weight="700" fill="#1256c8">TBS</text><text x="20" y="34" font-size="9" font-weight="700" fill="#111">NEWS</text><text x="20" y="44" font-size="9" font-weight="700" fill="#111">DIG</text><text x="71" y="39" font-size="19" fill="#ddd">【24h LIVE】最新ニ...</text><circle cx="263" cy="23" r="2.5" fill="#ddd"/><circle cx="263" cy="32" r="2.5" fill="#ddd"/><circle cx="263" cy="41" r="2.5" fill="#ddd"/><circle cx="150" cy="85" r="30" fill="none" stroke="#d8d8d8" stroke-width="4" stroke-dasharray="155 33" transform="rotate(-90 150 85)"/><rect x="249" y="131" width="38" height="12" fill="#777"/><text x="251" y="141" font-size="7" font-weight="700" fill="#222">NEWS DIG</text></svg>

<div class="a" style="left:942px;top:1573px;font-size:16px;line-height:23px;font-weight:700;color:#444">LIVE・配信予定</div>
<div class="a" style="left:942px;top:1602px;width:48px;height:18px;border-radius:9px;background:#f57c1f;color:#fff;font-size:12px;line-height:18px;text-align:center">今日</div>
<div class="a" style="left:998px;top:1603px;font-size:12px;line-height:16px;color:#888">2024/12/05</div>
<div class="a" style="left:1063px;top:1611px;width:179px;height:1px;background:#e4e4e4"></div>

<svg class="a" style="left:942px;top:1636px" width="114" height="64" viewBox="0 0 114 64" font-family="Noto Sans CJK JP"><rect width="114" height="64" fill="#eef0f4"/><polygon points="0,0 78,0 52,64 0,64" fill="#3a8ce4"/><text x="3" y="28" font-size="26" font-weight="700" fill="#fff">12.5</text><text x="3" y="50" font-size="15" font-weight="700" fill="#fff">昼</text><text x="22" y="50" font-size="8" fill="#fff">のニュース</text><circle cx="94" cy="22" r="13" fill="#caa08a"/><path d="M81 20c0-18 27-18 26 0-6-7-18-7-26 0z" fill="#1c1612"/><path d="M60 64c2-20 14-26 34-26s32 6 34 26z" fill="#7e6f62"/><polygon points="90,40 98,40 100,64 88,64" fill="#8c1a28"/></svg>
<div class="a sm" style="left:1064px;top:1635px">【LIVE】昼のニュース(Japan<br>News Digest Live)最新情報な<br>ど｜TBS NEWS DIG（12月5日）</div>
<div class="a" style="left:1064px;top:1688px;width:37px;height:18px;border-radius:9px;background:#f57c1f;color:#fff;font-size:11px;line-height:18px;text-align:center;font-weight:700">ϟLIVE</div>
<div class="a" style="left:1110px;top:1687px;font-size:14px;line-height:20px;font-weight:700;color:#f08a3c">11:00 <span style="font-weight:400;font-size:12px">～15:00</span></div>

<svg class="a" style="left:942px;top:1722px" width="114" height="64" viewBox="0 0 114 64" font-family="Noto Sans CJK JP"><rect width="114" height="64" fill="#1b63d0"/><rect x="1" y="3" width="112" height="44" fill="#d6dde0"/><rect x="20" y="5" width="10" height="36" fill="#4c7a3e"/><polygon points="55,24 68,6 84,24" fill="#9aa09c"/><rect x="38" y="24" width="72" height="26" fill="#a6aaa6"/><rect x="1" y="42" width="112" height="20" fill="#1b63d0"/><text x="14" y="58" font-size="11" font-weight="700" fill="#ffe94a">衆議院 予算委員会</text></svg>
<div class="a sm" style="left:1064px;top:1722px">【国会中継】衆議院 予算委員会<br>石破総理は初の予算委員会質疑<br>（2024年12月5日）</div>
<div class="a" style="left:1064px;top:1775px;width:37px;height:18px;border-radius:9px;background:#f57c1f;color:#fff;font-size:11px;line-height:18px;text-align:center;font-weight:700">ϟLIVE</div>
<div class="a" style="left:1110px;top:1774px;font-size:14px;line-height:20px;font-weight:700;color:#f08a3c">13:00 <span style="font-weight:400;font-size:12px">～17:00</span></div>

<svg class="a" style="left:942px;top:1809px" width="114" height="64" viewBox="0 0 114 64" font-family="Noto Sans CJK JP"><rect width="114" height="64" fill="#1b63d0"/><rect x="1" y="3" width="112" height="10" fill="#b8d0e4"/><rect x="1" y="13" width="112" height="8" fill="#4a5a48"/><rect x="1" y="21" width="112" height="24" fill="#8a8e90"/><g fill="#d8d8d8"><rect x="4" y="28" width="30" height="10"/><rect x="40" y="30" width="14" height="7"/><rect x="60" y="30" width="14" height="7"/><rect x="80" y="30" width="14" height="7"/></g><text x="8" y="59" font-size="11" font-weight="700" fill="#ffe94a">最も優秀なクルマは?</text></svg>
<div class="a sm" style="left:1064px;top:1809px">【ライブ】日本カー・オブ・<br>ザ・イヤー最終選考会　年間を<br>通じて最も優秀なクルマを選定</div>
<div class="a" style="left:1064px;top:1859px;font-size:14px;line-height:20px;font-weight:700;color:#bbb">15:00 <span style="font-weight:400;font-size:12px">～17:00</span></div>

<div class="a" style="left:942px;top:1892px;width:300px;height:160px;background:#f0f2f5"></div>
<div class="a" style="left:951px;top:1898px;font-size:14px;line-height:20px;font-weight:700;color:#444">オリジナル動画</div>
<svg class="a" style="left:950px;top:1927px" width="91" height="51" viewBox="0 0 91 51" font-family="Noto Sans CJK JP"><rect width="91" height="51" fill="#d4a32c"/><rect x="1.5" y="1.5" width="88" height="48" fill="#5c5644"/><ellipse cx="24" cy="22" rx="9" ry="11" fill="#b8937e"/><path d="M8 50c2-14 8-17 16-17s14 3 16 17z" fill="#23252c"/><ellipse cx="65" cy="32" rx="7" ry="8" fill="#b8937e"/><rect x="48" y="38" width="40" height="11" fill="#23252c"/><text x="40" y="13" font-size="9" font-weight="700" fill="#ffe94a">ゾンビ企業</text><text x="48" y="26" font-size="8" font-weight="700" fill="#e8451c">56万社</text><polygon points="8,2 16,7 8,12" fill="#fff"/></svg>
<svg class="a" style="left:1047px;top:1927px" width="90" height="51" viewBox="0 0 90 51" font-family="Noto Sans CJK JP"><rect width="90" height="51" fill="#7fd24a"/><rect x="2" y="2" width="86" height="47" fill="#4a5044"/><rect x="40" y="4" width="46" height="20" fill="#d8d8d4"/><ellipse cx="24" cy="22" rx="11" ry="13" fill="#c8a08a"/><path d="M13 18c0-14 22-14 22 0-6-5-16-5-22 0z" fill="#1a1614"/><ellipse cx="66" cy="24" rx="11" ry="14" fill="#d2a892"/><path d="M54 26c0-24 24-24 26 2l0 14-8-8c0-6-2-14-6-14s-8 2-12 6z" fill="#17120f"/><rect x="3" y="38" width="84" height="11" fill="#8a8f84"/><text x="5" y="47" font-size="7" font-weight="700" fill="#fff">転職　市場価値の高め方</text><polygon points="8,2 16,7 8,12" fill="#fff"/></svg>
<svg class="a" style="left:1143px;top:1927px" width="91" height="51" viewBox="0 0 91 51" font-family="Noto Sans CJK JP"><rect width="91" height="51" fill="#3c2a3a"/><rect x="35" y="0" width="46" height="40" fill="#625a78"/><ellipse cx="25" cy="22" rx="12" ry="13" fill="#d8b090"/><path d="M8 42c4-10 26-10 32 0v9H8z" fill="#a08a76"/><rect x="80" y="2" width="10" height="30" fill="#4a3a30"/><rect y="40" width="91" height="11" fill="#2a2420"/><text x="3" y="49" font-size="8" font-weight="700" fill="#fff">五輪に沸いたパリ市内</text><polygon points="10,3 18,8 10,13" fill="#fff"/></svg>
<div class="a" style="left:950px;top:1985px;width:91px;text-align:center;font-size:13px;line-height:16.5px;font-weight:700;color:#444;white-space:nowrap">経済の話で困っ<br>たときにみるや<br>つ</div>
<div class="a" style="left:1047px;top:1985px;width:90px;text-align:center;font-size:13px;line-height:16.5px;font-weight:700;color:#444">シノキャリ</div>
<div class="a" style="left:1143px;top:1985px;width:91px;text-align:center;font-size:13px;line-height:16.5px;font-weight:700;color:#444">WORLD<br>REPORTS</div>
<div class="a more" style="right:42px;top:2066px">もっと動画を見る ›</div>

<!-- ranking -->
<div class="a h3" style="left:943px;top:2117px">アクセスランキング</div>
<svg class="a" style="left:1111px;top:2122px" width="17" height="13" viewBox="0 0 17 13"><polygon points="1,2 5,6 8.5,0 12,6 16,2 15,9 2,9" fill="#f5b53c"/><rect x="2" y="10" width="13" height="2" fill="#f5b53c"/></svg>
<div class="a ln" style="left:942px;top:2146px;width:300px;height:2px"></div>
<div class="a" style="left:950px;top:2164px;width:78px;height:29px;border-radius:15px;background:#0a5cf0;color:#fff;font-size:14px;line-height:28px;font-weight:700;text-align:center">最新</div>
<div class="a" style="left:1045px;top:2164px;width:94px;height:29px;box-sizing:border-box;border:1px solid #333;border-radius:15px;font-size:14px;line-height:26px;font-weight:700;text-align:center;color:#333">24時間</div>
<div class="a" style="left:1156px;top:2164px;width:78px;height:29px;box-sizing:border-box;border:1px solid #333;border-radius:15px;font-size:14px;line-height:26px;font-weight:700;text-align:center;color:#333">週間</div>

<div class="a rn" style="top:2209px;background:#f7a823;color:#fff">1</div>
<div class="a sm" style="left:967px;top:2217px">「コバエが、料理に一瞬だけ止<br>まってしまった！」その料理、<br>衛生的に大丈夫？専門家...</div>
<svg class="a" style="left:1145px;top:2215px" width="97" height="54" viewBox="0 0 97 54"><rect width="97" height="54" fill="#5c5e4e"/><g stroke="#8c8e6e" stroke-width="8"><path d="M0 12L20-8M20 26L52-8M60 20L90-8"/></g><ellipse cx="22" cy="24" rx="9" ry="10" fill="#e8c09a"/><rect x="12" y="32" width="20" height="10" fill="#3c9a4a"/><rect x="8" y="40" width="36" height="6" fill="#8a6a30"/><ellipse cx="50" cy="22" rx="7" ry="8" fill="#b02020"/><ellipse cx="66" cy="22" rx="7" ry="8" fill="#b02020"/><rect x="46" y="42" width="50" height="10" fill="#403020"/></svg>

<div class="a rn" style="top:2280px;background:#8fa3d3;color:#fff">2</div>
<div class="a sm" style="left:967px;top:2288px">【速報】宇都宮市の住宅で男性<br>の遺体見つかる　顔に殴られた<br>痕や切り傷　殺人事件の...</div>
<svg class="a" style="left:1145px;top:2286px" width="97" height="54" viewBox="0 0 97 54"><rect width="97" height="54" fill="#6a7072"/><rect width="97" height="16" fill="#6b9ad4"/><rect x="8" y="14" width="35" height="24" fill="#c8ccd0"/><rect x="60" y="16" width="37" height="24" fill="#7a6c60"/><rect x="32" y="22" width="18" height="14" fill="#eaeaea"/><rect x="14" y="28" width="8" height="18" fill="#2c4a8a"/><path d="M0 44L60 36M40 54L97 42" stroke="#e8c838" stroke-width="1.5"/><rect width="25" height="13" fill="rgba(0,0,0,.75)"/><polygon points="9,3 18,6.5 9,10" fill="#fff"/></svg>

<div class="a rn" style="top:2350px;background:#e37a4a;color:#fff">3</div>
<div class="a sm" style="left:967px;top:2358px">「沢山の人が死にました」脱北<br>者が撮影した北朝鮮内部映像<br>飢えて倒れる人の姿も【...</div>
<svg class="a" style="left:1145px;top:2356px" width="97" height="54" viewBox="0 0 97 54"><rect width="97" height="54" fill="#8f8a66"/><rect x="65" width="32" height="40" fill="#c8b8aa"/><rect x="0" y="0" width="65" height="40" fill="#a39a74"/><ellipse cx="30" cy="28" rx="24" ry="8" fill="#5c4a38"/><ellipse cx="80" cy="24" rx="12" ry="10" fill="#a89888"/><rect y="38" width="97" height="16" fill="#8ab2e0"/></svg>

<div class="a rn" style="top:2420px">4</div>
<div class="a sm" style="left:967px;top:2428px">「体の中を見たい」15歳少女の<br>快楽殺人　数々のサインは見逃<br>された　高1同級生殺害...</div>
<svg class="a" style="left:1145px;top:2427px" width="97" height="54" viewBox="0 0 97 54"><rect width="97" height="54" fill="#c8bfa6"/><rect width="97" height="14" fill="#6a6458"/><rect x="6" y="6" width="60" height="22" fill="#5a6a74"/><rect x="20" y="10" width="35" height="18" fill="#9abcd0"/><rect y="30" width="97" height="14" fill="#d8d0ba"/><rect y="44" width="97" height="10" fill="#9a968a"/></svg>

<div class="a rn" style="top:2491px">5</div>
<div class="a sm" style="left:967px;top:2498px">「年賀状じまい」はがきの売上<br>が23年の“数百倍レベル”のワ<br>ケ 「年賀状辞退シール...</div>
<svg class="a" style="left:1145px;top:2497px" width="97" height="54" viewBox="0 0 97 54"><rect width="97" height="54" fill="#a09a8c"/><polygon points="0,24 40,4 64,0 88,40 66,54 15,54" fill="#ddd4c0"/><polygon points="60,0 97,6 97,54 80,54" fill="#d0c2a8"/><circle cx="90" cy="26" r="6" fill="#c84038"/><path d="M3 24l26-14 5 7-15 15z" fill="#c85a50"/><rect width="25" height="13" fill="rgba(0,0,0,.75)"/><polygon points="9,3 18,6.5 9,10" fill="#fff"/></svg>

<div class="a rn" style="top:2561px">6</div>
<div class="a sm" style="left:967px;top:2569px">「『日本に帰れ』と毎日言われ<br>た」イチローさんが独占インタ<br>で明かしたマリナーズ殿...</div>
<svg class="a" style="left:1145px;top:2567px" width="97" height="54" viewBox="0 0 97 54"><rect width="97" height="54" fill="#4a3520"/><ellipse cx="14" cy="18" rx="12" ry="9" fill="#e4c880"/><rect x="10" y="27" width="8" height="27" fill="#6a4a2c"/><path d="M24 54c2-16 14-22 26-22s24 6 28 22z" fill="#e4e4ea"/><ellipse cx="50" cy="20" rx="11" ry="13" fill="#c09078"/><path d="M36 14c2-14 26-14 28 0z" fill="#e8e8e8"/><ellipse cx="58" cy="40" rx="10" ry="6" fill="#2c4c9a"/></svg>

<div class="a rn" style="top:2632px">7</div>
<div class="a sm" style="left:967px;top:2640px">女子小学生と避妊具使わず複数<br>回性交...元自衛官の男に下され<br>た判決は「相手も同意し...</div>
<svg class="a" style="left:1145px;top:2638px" width="97" height="54" viewBox="0 0 97 54" font-family="Noto Sans CJK JP"><rect width="97" height="54" fill="#b89a8a"/><rect x="10" y="10" width="40" height="8" fill="#cdb4a4"/><ellipse cx="60" cy="18" rx="8" ry="10" fill="#5c4a3c"/><rect x="50" y="26" width="28" height="20" fill="#4a5040"/><rect y="40" width="97" height="14" fill="#55585c"/><text x="5" y="51" font-size="9" font-weight="700" fill="#fff">小学生と性交・裸撮影</text></svg>

<div class="a rn" style="top:2702px">8</div>
<div class="a sm" style="left:967px;top:2710px">暖房“20分の外出”なら「切る」<br>or「つけっぱなし」どっちが節<br>電?冬のエアコン節約...</div>
<svg class="a" style="left:1145px;top:2708px" width="97" height="54" viewBox="0 0 97 54"><rect width="97" height="54" fill="#d8d6da"/><rect width="97" height="6" fill="#e86a8a"/><rect x="4" y="14" width="50" height="8" fill="#e8a070"/><rect x="4" y="24" width="36" height="22" fill="#ebe0d0"/><rect x="42" y="28" width="18" height="18" fill="#e8e8b0"/><rect x="66" y="28" width="26" height="16" fill="#b8dce0"/><rect y="48" width="97" height="6" fill="#c8b0a0"/></svg>

<div class="a rn" style="top:2772px">9</div>
<div class="a sm" style="left:967px;top:2780px">刺殺された男性の長男と結婚し<br>ながら次男とも肉体関係『異常<br>な関係性』の一族を支配...</div>
<svg class="a" style="left:1145px;top:2779px" width="97" height="54" viewBox="0 0 97 54"><rect width="97" height="54" fill="#5a7a4a"/><ellipse cx="25" cy="22" rx="16" ry="18" fill="#a87a5c"/><path d="M8 22C8-4 42-4 42 22 36 10 18 10 8 22z" fill="#16110e"/><rect x="8" y="36" width="35" height="18" fill="#1c1c1c"/><path d="M16 32q10 10 20 0v8H16z" fill="#c0cfd4"/><ellipse cx="70" cy="24" rx="13" ry="16" fill="#c09c84"/><path d="M56 20c0-22 28-22 28 0-6-8-20-8-28 0z" fill="#1a1a1e"/><path d="M50 54c2-12 10-16 20-16s20 4 22 16z" fill="#20242c"/></svg>

<div class="a rn" style="top:2843px">10</div>
<div class="a sm" style="left:967px;top:2851px">12歳の女子小学生と複数回性<br>交...元自衛官の男の裁判「同意<br>があれば何歳であっても許...</div>
<svg class="a" style="left:1145px;top:2849px" width="97" height="54" viewBox="0 0 97 54" font-family="Noto Sans CJK JP"><rect width="97" height="54" fill="#b89a8a"/><rect x="10" y="8" width="76" height="8" fill="#cdb4a4"/><ellipse cx="48" cy="10" rx="8" ry="10" fill="#5c4a3c"/><rect x="32" y="18" width="34" height="22" fill="#4a5040"/><rect y="40" width="97" height="14" fill="#55585c"/><text x="3" y="51" font-size="9" font-weight="700" fill="#fff">女子小学生と数回性交</text></svg>
<div class="a more" style="right:42px;top:2925px">もっと見る ›</div>

<!-- area -->
<div class="a h3" style="left:942px;top:2974px">各エリアのニュースを見る</div>
<div class="a ln" style="left:942px;top:3003px;width:300px;height:2px;background:#1668a8"></div>
<svg class="a" style="left:920px;top:2960px" width="364" height="400" viewBox="0 0 1092 1200"><g fill="#e6e6e6"><rect x="711" y="183" width="195" height="167" rx="6"/><rect x="675" y="286" width="56" height="98"/><rect x="762" y="381" width="46" height="432"/><rect x="675" y="414" width="88" height="380"/><rect x="549" y="628" width="29" height="90"/><rect x="578" y="658" width="100" height="165"/><rect x="289" y="708" width="401" height="115"/><rect x="690" y="740" width="36" height="55"/><rect x="473" y="823" width="76" height="58"/><rect x="628" y="591" width="15" height="37"/><rect x="319" y="855" width="123" height="56"/><rect x="146" y="754" width="112" height="76"/><rect x="177" y="830" width="81" height="142"/><rect x="127" y="933" width="17" height="82"/></g>
<g><circle cx="735" cy="289" r="9" fill="#c8202e"/><circle cx="726" cy="433" r="9" fill="#c8202e"/><circle cx="764" cy="491" r="9" fill="#0a1f8c"/><circle cx="732" cy="553" r="9" fill="#30a070"/><circle cx="789" cy="592" r="9" fill="#0f5ca8"/><circle cx="692" cy="620" r="9" fill="#0a6ca0"/><circle cx="768" cy="630" r="9" fill="#0f7cb8"/><circle cx="598" cy="677" r="9" fill="#d80a3a"/><circle cx="566" cy="698" r="9" fill="#109a4c"/><circle cx="655" cy="708" r="9" fill="#109a58"/><circle cx="394" cy="723" r="9" fill="#0c4a9a"/><circle cx="674" cy="748" r="9" fill="#f090b0"/><circle cx="741" cy="747" r="9" fill="#0a5cf0"/><circle cx="307" cy="787" r="9" fill="#ffd21e"/><circle cx="351" cy="804" r="9" fill="#d82878"/><circle cx="408" cy="804" r="9" fill="#10905a"/><circle cx="487" cy="819" r="9" fill="#b4d020"/><circle cx="573" cy="806" r="9" fill="#18a8e0"/><circle cx="643" cy="806" r="9" fill="#1e2a8c"/><circle cx="221" cy="770" r="9" fill="#e84a9c"/><circle cx="160" cy="810" r="9" fill="#d01860"/><circle cx="241" cy="816" r="9" fill="#0c4ca8"/><circle cx="192" cy="858" r="9" fill="#10a8a8"/><circle cx="351" cy="870" r="9" fill="#18b0e0"/><circle cx="394" cy="895" r="9" fill="#0c4a9a"/><circle cx="240" cy="918" r="9" fill="#b4d020"/><circle cx="204" cy="952" r="9" fill="#0c78c8"/><circle cx="135" cy="990" r="9" fill="#4a48e0"/></g></svg>
<div class="a ar" style="left:993px;top:3054px;width:144px;letter-spacing:1px">北海道・東北<i>›</i></div>
<div class="a ar" style="left:993px;top:3114px;width:144px;letter-spacing:1px">中部・甲信越<i>›</i></div>
<div class="a ar" style="left:950px;top:3160px;width:130px;letter-spacing:1px">九州・沖縄<i>›</i></div>
<div class="a ar" style="left:1134px;top:3243px;width:91px;letter-spacing:3px">関東<i>›</i></div>
<div class="a ar" style="left:1017px;top:3282px;width:172px;letter-spacing:1px">近畿・中国・四国<i>›</i></div>
<div class="a more" style="right:42px;top:3328px">エリア一覧へ ›</div>

<!-- footer -->
<div class="a" style="left:0;top:3954px;width:1284px;height:2px;background:#e8e8e8"></div>
<svg class="a" style="left:42px;top:3996px" width="270" height="24" viewBox="0 0 421 37">
<text x="0" y="36" font-family="Liberation Sans" font-weight="700" font-size="49" textLength="79" lengthAdjust="spacingAndGlyphs" fill="#0a5cf0">TBS</text>
<text x="91" y="36" font-family="Liberation Sans" font-weight="700" font-size="49" textLength="219" lengthAdjust="spacingAndGlyphs" fill="#000">NEWS DIG</text>
<circle cx="326" cy="5" r="3.5"/><circle cx="343" cy="5" r="3.5"/>
<polygon points="322,13 347,13 339,25 342,25 334.5,36 327,25 330,25"/>
<text x="359" y="15" font-family="Liberation Sans" font-weight="700" font-size="15" textLength="62" lengthAdjust="spacingAndGlyphs">Powered</text>
<text x="359" y="33" font-family="Liberation Sans" font-weight="700" font-size="17" textLength="62" lengthAdjust="spacingAndGlyphs">by JNN</text>
</svg>
<div class="a fn" style="left:563px">トップニュース</div>
<div class="a fn" style="left:718px">深掘りDIG</div>
<div class="a fn" style="left:844px">LIVE・動画</div>
<div class="a fn" style="left:973px">天気防災</div>
<div class="a fn" style="left:1088px">地域（JNNのニュース）</div>
<div class="a fl" style="left:84px">運営会社・連絡先</div><div class="a fs" style="left:209px"></div>
<div class="a fl" style="left:237px">プライバシーポリシー</div><div class="a fs" style="left:385px"></div>
<div class="a fl" style="left:413px">サイトポリシー</div><div class="a fs" style="left:526px"></div>
<div class="a fl" style="left:554px">Cookieポリシー</div><div class="a fs" style="left:671px"></div>
<div class="a fl" style="left:700px">お問い合わせ</div><div class="a fs" style="left:800px"></div>
<div class="a fl" style="left:829px">利用規約</div><div class="a fs" style="left:905px"></div>
<div class="a fl" style="left:934px">デジタル広告の品質・IVT対策</div><div class="a fs" style="left:1124px"></div>
<div class="a fl" style="left:1152px">広告掲載</div>
<div class="a" style="left:0;top:4113px;width:1284px;text-align:center;font-size:11px;line-height:18px;color:#555">Copyright TBS・JNN NEWS DIG, LLC. All rights reserved.</div>
</body></html>
